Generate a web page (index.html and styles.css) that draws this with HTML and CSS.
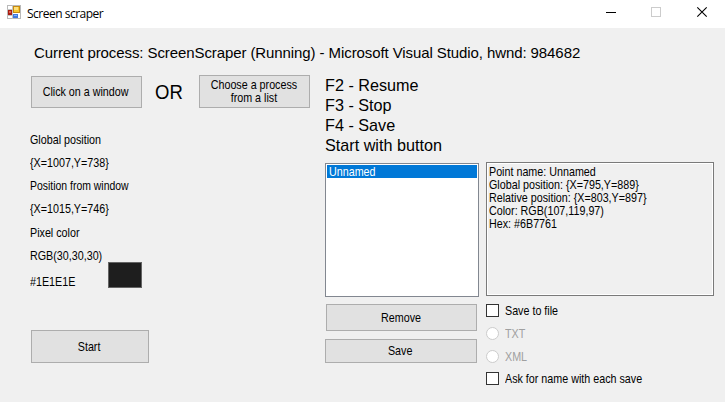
FILE: index.html
```html
<!DOCTYPE html>
<html lang="en">
<head>
<meta charset="utf-8">
<title>Screen scraper</title>
<link rel="stylesheet" href="styles.css">
</head>
<body>
<header class="titlebar">
  <svg class="app-icon" width="14" height="14" viewBox="0 0 14 14" shape-rendering="crispEdges">
    <rect x=".5" y=".5" width="13" height="13" fill="#fff" stroke="#b9b9b9"/>
    <path d="M5.5 0v14M0 4.5h6M0 10.5h6" stroke="#c4c4c4" fill="none"/>
    <rect x="6.5" y="1.5" width="6" height="6" fill="#f7c62c" stroke="#c68a12"/>
    <rect x="7" y="2" width="4" height="3" fill="#ffe07a"/>
    <rect x="1" y="5" width="4" height="5" fill="#a91d12"/>
    <rect x="2" y="6" width="2" height="2" fill="#e0604c"/>
    <rect x="6" y="9" width="5" height="4" fill="#3f78de"/>
    <rect x="7" y="10" width="3" height="1" fill="#86b1f5"/>
  </svg>
  <h1 class="title">Screen scraper</h1>
  <svg class="controls" width="102" height="12" viewBox="0 0 102 12" fill="none">
    <path d="M0 6.5h10" stroke="#000"/>
    <rect x="45.5" y="1.5" width="9" height="9" stroke="#ccc"/>
    <path d="M91.3 1.3l9.4 9.4M100.7 1.3l-9.4 9.4" stroke="#000" stroke-width="1.1"/>
  </svg>
</header>
<main class="client">
  <p class="process">Current process: ScreenScraper (Running) - Microsoft Visual Studio, hwnd: 984682</p>
  <div class="columns">
    <section class="left">
      <div class="pick">
        <button class="btn click"><span class="t">Click on a window</span></button>
        <span class="or"><span class="t">OR</span></span>
        <button class="btn choose"><span class="t">Choose a process<br>from a list</span></button>
      </div>
      <div class="info">
        <div class="readout">
          <p><span class="t">Global position</span></p>
          <p><span class="t">{X=1007,Y=738}</span></p>
          <p><span class="t tight">Position from window</span></p>
          <p><span class="t">{X=1015,Y=746}</span></p>
          <p class="gap"><span class="t">Pixel color</span></p>
          <p><span class="t">RGB(30,30,30)</span></p>
          <p class="hex"><span class="t">#1E1E1E</span></p>
        </div>
        <div class="swatch"></div>
      </div>
      <button class="btn start"><span class="t">Start</span></button>
    </section>
    <section class="right">
      <p class="keys">F2 - Resume<br>F3 - Stop<br>F4 - Save<br>Start with button</p>
      <div class="panels">
        <div class="points">
          <div class="list"><div class="item"><span class="t">Unnamed</span></div></div>
          <button class="btn remove"><span class="t">Remove</span></button>
          <button class="btn save"><span class="t">Save</span></button>
        </div>
        <div class="details">
          <div class="box"><span class="t">Point name: Unnamed<br>Global position: {X=795,Y=889}<br>Relative position: {X=803,Y=897}<br>Color: RGB(107,119,97)<br>Hex: #6B7761</span></div>
          <div class="option first"><i class="check"></i><span class="t">Save to file</span></div>
          <div class="option off"><i class="radio"></i><span class="t">TXT</span></div>
          <div class="option off"><i class="radio"></i><span class="t">XML</span></div>
          <div class="option last"><i class="check"></i><span class="t">Ask for name with each save</span></div>
        </div>
      </div>
    </section>
  </div>
</main>
</body>
</html>
```
FILE: styles.css
```css
* { box-sizing: border-box; margin: 0; padding: 0; }
body { width: 725px; height: 402px; overflow: hidden; background: #f0f0f0; color: #000; font: 12.4px/13px "Liberation Sans", Arial, sans-serif; }
.titlebar { display: flex; height: 28px; background: #fff; padding-right: 17px; }
.app-icon { margin: 5px 0 0 7px; }
.title { flex: 1; margin-left: 6px; font: 400 12px/27px "Open Sans", sans-serif; letter-spacing: -.5px; }
.controls { margin-top: 6px; }
.process { padding: 15px 0 0 34px; height: 47px; font: 15px/20px "Liberation Sans", Arial, sans-serif; letter-spacing: -.09px; white-space: nowrap; }
.columns { display: flex; }
.left { width: 325px; padding-left: 31px; }
.pick { display: flex; height: 33px; }
.t { display: inline-block; white-space: nowrap; transform: scaleX(.866); transform-origin: 0 50%; }
.t.tight { transform: scaleX(.842); }
.btn { display: flex; align-items: center; justify-content: center; background: #e1e1e1; border: 1px solid #adadad; font: inherit; color: inherit; text-align: center; }
.btn .t { transform-origin: 50% 50%; }
.click { width: 111px; height: 32px; margin-top: 1px; padding-right: 2px; }
.or { width: 57px; padding-left: 13px; font: 19.5px/35px "Liberation Sans", Arial, sans-serif; }
.or .t { transform: scaleX(.95); }
.choose { width: 111px; height: 33px; padding-right: 2px; }
.info { display: flex; margin-top: 21px; height: 201px; }
.readout { width: 78px; margin-left: -1px; padding-top: 5px; }
.readout p { height: 23px; }
.readout .gap { margin-top: 1px; }
.readout .hex { margin-top: 3px; }
.swatch { width: 34px; height: 26px; margin-top: 133px; border: 1px solid #646464; background: #1e1e1e; }
.start { width: 118px; height: 33px; padding: 2px 2px 0 0; }
.keys { height: 88px; font: 16.2px/20px "Liberation Sans", Arial, sans-serif; }
.panels { display: flex; gap: 7px; }
.points { width: 154px; }
.list { height: 134px; border: 1px solid #828790; background: #fff; padding: 1px; }
.item { height: 13px; background: #0078d7; color: #fff; padding-left: 2px; line-height: 15px; }
.remove { width: 151px; height: 27px; margin: 7px 0 8px 1px; padding-top: 2px; }
.save { width: 152px; height: 24px; padding-right: 2px; }
.details { width: 228px; margin-top: -1px; }
.box { height: 134px; border: 1px solid #7a7a7a; box-shadow: inset 0 0 0 1px #fff; padding: 3px 2px; }
.option { display: flex; height: 13px; gap: 6px; margin-top: 10px; }
.option.first { margin-top: 8px; }
.option.last { margin-top: 9px; }
.option .t { margin-top: 1px; }
.off { color: #a0a0a0; }
.check, .radio { width: 13px; height: 13px; background: #fff; border: 1px solid #333; }
.radio { border-color: #ccc; border-radius: 50%; }
```
